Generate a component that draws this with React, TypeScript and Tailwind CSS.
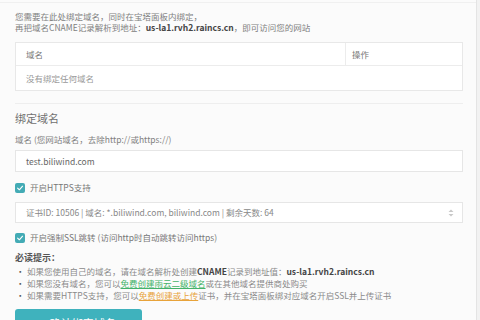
import React from "react";

function Check() {
  return (
    <span className="flex h-[10px] w-[10px] shrink-0 items-center justify-center rounded-[2px] bg-[#43abb5]">
      <svg width="8" height="8" viewBox="0 0 10 10">
        <path d="M2 5.2 L4.2 7.2 L8.2 2.8" fill="none" stroke="#fff" strokeWidth="1.4" strokeLinecap="round" strokeLinejoin="round" />
      </svg>
    </span>
  );
}

export default function App() {
  return (
    <div
      className="flex h-[320px] w-[480px] overflow-hidden bg-[#fbfbfb] text-[8.5px] text-[#808080]"
      style={{ fontFamily: '"Noto Sans CJK SC", "Noto Sans", sans-serif' }}
    >
      <div className="flex-1 border-t border-[#f0f0f0] mt-[2px] px-[15px] pr-[13px]">
        <div className="pt-[8px] leading-[11px]">
          <div>您需要在此处绑定域名，同时在宝塔面板内绑定，</div>
          <div>
            再把域名CNAME记录解析到地址：
            <span className="font-bold text-[#444]">us-la1.rvh2.raincs.cn</span>，即可访问您的网站
          </div>
        </div>

        <div className="mt-[9px] border border-[#e8e8e8] bg-white">
          <div className="flex h-[23px] items-center border-b border-[#ececec] text-[#777]">
            <div className="flex h-full w-[330px] items-center border-r border-[#ececec] pl-[10px]">域名</div>
            <div className="pl-[6px]">操作</div>
          </div>
          <div className="flex h-[24px] items-center pl-[10px] text-[#999]">没有绑定任何域名</div>
        </div>

        <div className="mt-[12px] border-t border-[#eeeeee]" />

        <div className="mt-[7px] text-[11px] leading-[14px] text-[#707070]">绑定域名</div>
        <div className="mt-[9px] leading-[11px]">域名 (您网站域名，去除http://或https://)</div>
        <div className="mt-[5px] flex h-[22px] items-center border border-[#e6e6e6] bg-white pl-[10px] text-[#666]">
          test.biliwind.com
        </div>

        <div className="mt-[10px] flex h-[11px] items-center gap-[5px] text-[#777]">
          <Check />
          <span>开启HTTPS支持</span>
        </div>

        <div className="mt-[9px] flex h-[21px] items-center justify-between border border-[#e6e6e6] bg-white pl-[10px] pr-[8px] text-[#888]">
          <span>证书ID: 10506 | 域名: *.biliwind.com, biliwind.com | 剩余天数: 64</span>
          <svg width="6" height="8" viewBox="0 0 6 8">
            <path d="M3 0.5 L5.5 3 H0.5 Z" fill="#c8c8c8" />
            <path d="M3 7.5 L5.5 5 H0.5 Z" fill="#c8c8c8" />
          </svg>
        </div>

        <div className="mt-[9px] flex h-[11px] items-center gap-[5px] text-[#777]">
          <Check />
          <span>开启强制SSL跳转 (访问http时自动跳转访问https)</span>
        </div>

        <div className="mt-[9px] text-[9px] font-semibold leading-[11px] text-[#555]">必读提示：</div>
        <div className="mt-[2px] leading-[12px] text-[#8a8a8a]">
          <div className="flex">
            <span className="w-[12px] pl-[1px] text-[#555]">•</span>
            <span>
              如果您使用自己的域名，请在域名解析处创建<span className="font-bold text-[#444]">CNAME</span>记录到地址值：
              <span className="font-bold text-[#444]">us-la1.rvh2.raincs.cn</span>
            </span>
          </div>
          <div className="flex">
            <span className="w-[12px] pl-[1px] text-[#555]">•</span>
            <span>
              如果您没有域名，您可以<span className="text-[#44b36a] underline">免费创建雨云二级域名</span>或在其他域名提供商处购买
            </span>
          </div>
          <div className="flex">
            <span className="w-[12px] pl-[1px] text-[#555]">•</span>
            <span>
              如果需要HTTPS支持，您可以<span className="text-[#e8a33a] underline">免费创建或上传</span>证书，并在宝塔面板绑对应域名开启SSL并上传证书
            </span>
          </div>
        </div>

        <div className="mt-[8px] flex h-[28px] w-[127px] items-center justify-center rounded-[3px] bg-[#3fb2bd] text-[11px] text-white">
          + 确认绑定域名
        </div>
      </div>
      <div className="w-[4px] border-l border-[#e4e4e4] bg-[#f2f2f2]" />
    </div>
  );
}
